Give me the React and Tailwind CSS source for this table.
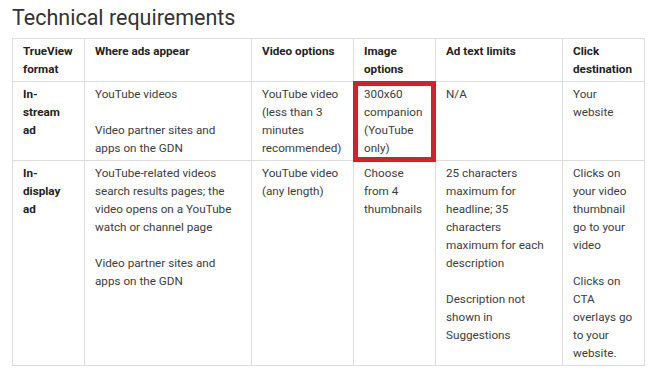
import React from 'react';

const cols = [72, 167, 102, 82, 127, 82];

const head = [
  ['TrueView', 'format'],
  ['Where ads appear'],
  ['Video options'],
  ['Image', 'options'],
  ['Ad text limits'],
  ['Click', 'destination'],
];

// each cell is a list of lines, '' = blank line
const rows = [
  {
    label: ['In-', 'stream', 'ad'],
    cells: [
      ['YouTube videos', '', 'Video partner sites and', 'apps on the GDN'],
      ['YouTube video', '(less than 3', 'minutes', 'recommended)'],
      ['300x60', 'companion', '(YouTube', 'only)'],
      ['N/A'],
      ['Your', 'website'],
    ],
    mark: 2,
  },
  {
    label: ['In-', 'display', 'ad'],
    cells: [
      ['YouTube-related videos', 'search results pages; the', 'video opens on a YouTube', 'watch or channel page', '', 'Video partner sites and', 'apps on the GDN'],
      ['YouTube video', '(any length)'],
      ['Choose', 'from 4', 'thumbnails'],
      ['25 characters', 'maximum for', 'headline; 35', 'characters', 'maximum for each', 'description', '', 'Description not', 'shown in', 'Suggestions'],
      ['Clicks on', 'your video', 'thumbnail', 'go to your', 'video', '', 'Clicks on', 'CTA', 'overlays go', 'to your', 'website.'],
    ],
  },
];

function Lines({ lines }) {
  return lines.map((l, i) => (
    <div key={i} className="whitespace-nowrap h-[18px]">{l}</div>
  ));
}

export default function App() {
  return (
    <div className="w-[655px] h-[376px] bg-white overflow-hidden text-[#3c3c3c]" style={{ fontFamily: 'Roboto, "Liberation Sans", sans-serif' }}>
      <h1 className="pl-[12px] pt-[3px] mb-[5px] text-[21.5px] leading-[30px] font-normal text-[#333]">Technical requirements</h1>
      <table className="ml-[12px] border-collapse table-fixed w-[632px] text-[11.7px] leading-[18px]">
        <colgroup>
          {cols.map((w, i) => <col key={i} style={{ width: w }} />)}
        </colgroup>
        <thead>
          <tr>
            {head.map((h, i) => (
              <th key={i} className="border border-[#dcdcdc] px-[10px] pt-[3px] pb-[3px] text-left align-top font-bold text-[#222]">
                <Lines lines={h} />
              </th>
            ))}
          </tr>
        </thead>
        <tbody>
          {rows.map((r, ri) => (
            <tr key={ri}>
              <td className="border border-[#dcdcdc] px-[10px] pt-[3px] pb-[3px] align-top font-bold text-[#222]">
                <Lines lines={r.label} />
              </td>
              {r.cells.map((c, ci) => (
                <td key={ci} className="relative border border-[#dcdcdc] px-[10px] pt-[3px] pb-[3px] align-top">
                  <Lines lines={c} />
                  {r.mark === ci && (
                    <div className="absolute -left-[1px] -top-[1px] -right-[1px] -bottom-[2px] border-[5px] border-[#d31f2e]" />
                  )}
                </td>
              ))}
            </tr>
          ))}
        </tbody>
      </table>
    </div>
  );
}
